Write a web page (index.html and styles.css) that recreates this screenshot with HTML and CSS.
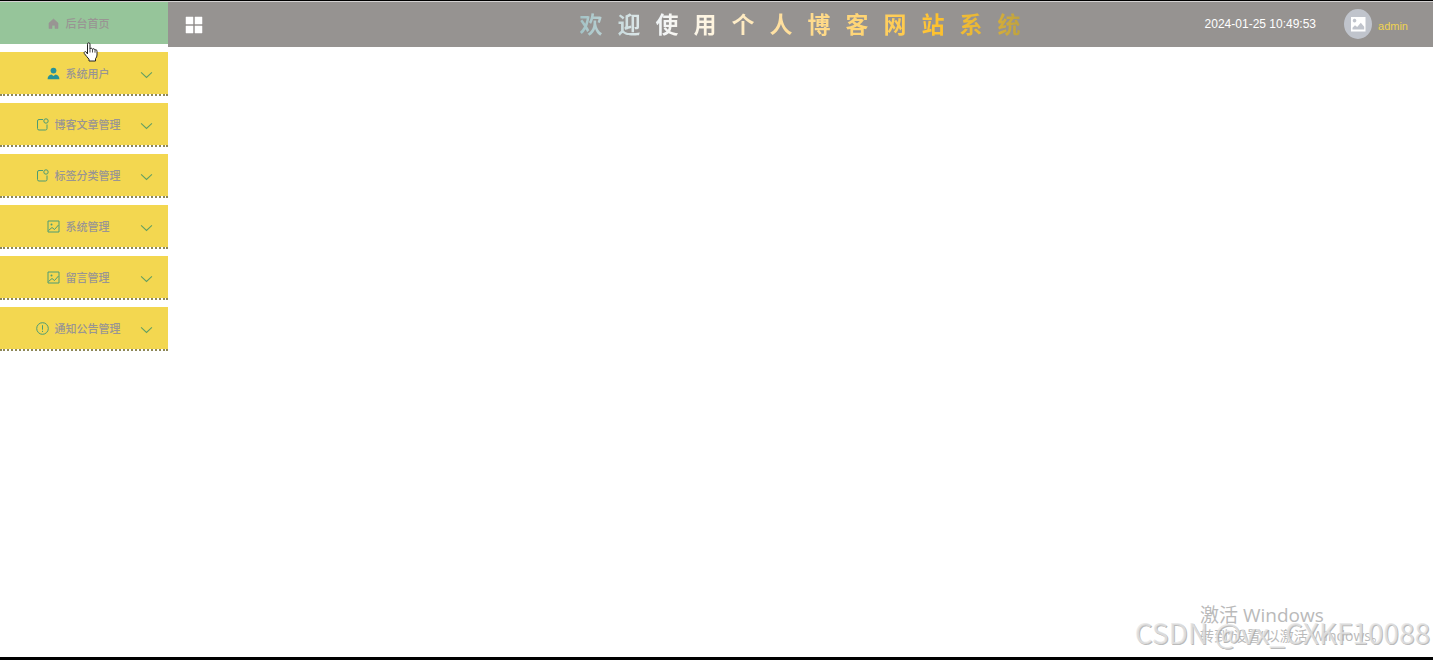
FILE: index.html
```
<!DOCTYPE html>
<html lang="zh-CN">
<head>
<meta charset="utf-8">
<title>个人博客网站系统</title>
<link rel="stylesheet" href="styles.css">
</head>
<body>
<svg class="defs" aria-hidden="true">
  <symbol id="down" viewBox="0 0 12 12"><path d="M1 3.2 6 7.8l5-4.600" fill="none" stroke="currentColor"/></symbol>
  <symbol id="note" viewBox="0 0 13 13"><path d="M7 1.500H3Q1.500 1.500 1.500 3v7.500Q1.500 12 3 12H9.500Q11 12 11 10.500V6.500" fill="none" stroke="currentColor"/><circle cx="10" cy="3" r="2.200" fill="none" stroke="currentColor"/></symbol>
  <symbol id="picture" viewBox="0 0 13 13"><path d="M1 1h11v11H1zM1.500 10.500l3.500-3 2.500 2L11.500 5" fill="none" stroke="currentColor"/><circle cx="4.500" cy="4.500" r="1" fill="currentColor"/></symbol>
  <symbol id="notice" viewBox="0 0 13 13"><circle cx="6.500" cy="6.500" r="5.800" fill="none" stroke="currentColor"/><path d="M6.500 3.200v4.500M6.500 8.800v1.200" stroke="currentColor"/></symbol>
  <symbol id="user" viewBox="0 0 13 13"><circle cx="6.500" cy="3.600" r="2.900" fill="currentColor"/><path d="M.6 12.300c0-3 1.500-4.500 3.900-4.800l2 1.600 2-1.600c2.400.3 3.900 1.800 3.900 4.800z" fill="currentColor"/></symbol>
  <symbol id="home" viewBox="0 0 13 13"><path d="M6.500 2 11 6v5.500H8V8.200H5v3.300H2V6z" fill="currentColor" stroke="currentColor" stroke-width=".6" stroke-linejoin="round"/></symbol>
</svg>
<div class="app">
  <nav class="sidebar">
    <a class="item home" href="#"><svg class="icon"><use href="#home"/></svg><span>后台首页</span></a>
    <button class="item" type="button"><svg class="icon"><use href="#user"/></svg><span>系统用户</span><svg class="arrow"><use href="#down"/></svg></button>
    <button class="item" type="button"><svg class="icon"><use href="#note"/></svg><span>博客文章管理</span><svg class="arrow"><use href="#down"/></svg></button>
    <button class="item" type="button"><svg class="icon"><use href="#note"/></svg><span>标签分类管理</span><svg class="arrow"><use href="#down"/></svg></button>
    <button class="item" type="button"><svg class="icon"><use href="#picture"/></svg><span>系统管理</span><svg class="arrow"><use href="#down"/></svg></button>
    <button class="item" type="button"><svg class="icon"><use href="#picture"/></svg><span>留言管理</span><svg class="arrow"><use href="#down"/></svg></button>
    <button class="item" type="button"><svg class="icon"><use href="#notice"/></svg><span>通知公告管理</span><svg class="arrow"><use href="#down"/></svg></button>
  </nav>
  <div class="content">
    <header class="header">
      <button class="toggle" type="button" aria-label="菜单"><svg class="grid-icon" viewBox="0 0 18 18"><path d="M1 1h7v7H1zM10 1h7v7h-7zM1 10h7v7H1zM10 10h7v7h-7z" fill="#fff" stroke="#fff" stroke-width=".5"/></svg></button>
      <h1 class="title">欢迎使用个人博客网站系统</h1>
      <div class="account">
        <time class="clock">2024-01-25 10:49:53</time>
        <svg class="avatar" viewBox="0 0 28 30"><ellipse cx="14" cy="15" rx="14" ry="15" fill="#c0c4cc"/><path fill="#fff" fill-rule="evenodd" d="M7 8h14.500v14.500H7zM8.500 20.500h11.700v-2.700l-3.400-4-3.600 4.200-2.200-1.700-2.500 2.400zM10.500 9.800a1.800 1.800 0 1 0 .1 0z"/></svg>
        <a class="name" href="#">admin</a>
      </div>
    </header>
    <main></main>
  </div>
</div>
<svg class="pointer" viewBox="0 0 15 20" aria-hidden="true"><path d="M4.500 12V2.200Q4.500.8 5.700.8T7 2.200V7q.3-1 1.300-.8T9.500 7.500q.3-1 1.300-.7T12 8.200q.4-.7 1.200-.4t.8 1.500V13q0 2-1.500 3.700V19H6v-1.800Q4 15 1.300 11.500q-.5-1.200.4-1.700t1.500.3z" fill="#fff" stroke="#222"/><path d="M7 7v3.500M9.500 7.500v3M12 8.200v2.500" stroke="#222" stroke-width=".8"/></svg>
<div class="activate"><p class="activate-title">激活 Windows</p><p class="activate-text">转到“设置”以激活 Windows。</p></div>
<div class="credit">CSDN @vx_CXKF10088</div>
</body>
</html>
```
FILE: styles.css
```
* { box-sizing: border-box; }
body {
  margin: 0;
  min-height: 100vh;
  display: flex;
  border-top: 1px solid #000;
  border-bottom: 3px solid #000;
  background: #fff;
  font-family: "Liberation Sans", "Noto Sans CJK SC", sans-serif;
}
.defs { position: absolute; width: 0; height: 0; }
.app { display: flex; flex: 1; border-top: 1px solid #d4d2d2; }
.sidebar { display: flex; flex-direction: column; gap: 7px; width: 168px; flex: none; }
.item {
  display: flex;
  align-items: center;
  justify-content: center;
  gap: 6px;
  position: relative;
  width: 100%;
  height: 44px;
  padding: 0 12px 0 0;
  border: 0;
  border-bottom: 2px dotted #8d8758;
  background: #f3d750;
  background-clip: padding-box;
  color: #999593;
  font: 500 11px/16px "Noto Sans CJK SC", sans-serif;
  text-decoration: none;
}
.home { height: 42px; margin-bottom: 1px; border: 0; background: #96c59a; }
.icon { width: 13px; height: 13px; color: #4d9b74; }
.item:nth-child(2) .icon { color: #26929b; }
.home .icon { color: #999593; }
.arrow { position: absolute; right: 15px; top: 17px; width: 13px; height: 13px; color: #629f62; }
.content { flex: 1; }
.header {
  display: grid;
  grid-template-columns: 1fr auto 1fr;
  align-items: center;
  height: 45px;
  padding: 0 25px 0 17px;
  background: #969391;
}
.toggle { justify-self: start; padding: 0; border: 0; background: none; }
.grid-icon { display: block; width: 18px; height: 18px; }
.title {
  margin: 0;
  padding: 0 0 4px 22px;
  font: 700 23px/34px "Noto Sans CJK SC", sans-serif;
  letter-spacing: 15px;
  color: transparent;
  background: linear-gradient(90deg, #a0c1c4 4%, #f4f6f7 22%, #fff5e0 32%, #ffe0a0 46%, #ffd470 65%, #ffc22d 79%, #e8b736 88%, #bda23f 97%);
  background-clip: text;
  -webkit-background-clip: text;
}
.account { display: flex; align-items: center; justify-self: end; padding-bottom: 2px; }
.clock { color: #fff; font-size: 12px; line-height: 16px; margin-right: 28px; }
.avatar { width: 28px; height: 30px; margin-right: 6px; }
.name { padding-top: 4px; color: #f0d250; font-size: 11px; line-height: 16px; text-decoration: none; }
.pointer { position: absolute; left: 83px; top: 42px; width: 15px; height: 20px; }
.activate { position: absolute; right: 48px; bottom: 15px; color: #bababa; font-family: "Open Sans", "Noto Sans CJK SC", sans-serif; white-space: nowrap; }
.activate p { margin: 0; }
.activate-title { font-size: 19px; line-height: 24px; }
.activate-text { font-size: 14px; line-height: 18px; }
.credit { position: absolute; right: 3px; bottom: 13px; color: #e4e4e4cc; font: 400 28px/30px "Noto Sans CJK SC", sans-serif; text-shadow: 1px 1px 0 #a8a8a8cc; white-space: nowrap; }
```
